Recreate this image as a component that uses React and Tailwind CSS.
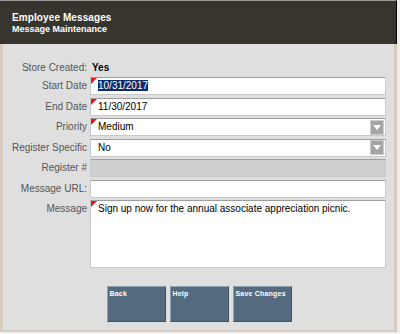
import React from 'react';

const Flag = () => (
  <svg className="absolute left-0 top-0" width="6" height="6" viewBox="0 0 6 6">
    <polygon points="0,0 6,0 0,6" fill="#e8141b" />
  </svg>
);

const Caret = () => (
  <div className="ml-auto mr-[1px] w-[14px] h-[15px] bg-[#a4a4a4] border border-[#cdcdcd] flex items-center justify-center">
    <svg width="8" height="5" viewBox="0 0 8 5">
      <polygon points="0,0 8,0 4,5" fill="#ffffff" />
    </svg>
  </div>
);

const Row = ({ label, flag, select, disabled, tall, children }) => (
  <div className="flex items-start">
    <div className="w-[84px] text-right text-[10px] leading-[18px] text-[#555555] shrink-0">{label}</div>
    <div
      className={`relative ml-[3px] w-[296px] flex items-start border border-[#c9c9c9] border-t-[#9e9e9e] ${
        tall ? 'h-[68px]' : 'h-[18px]'
      } ${disabled ? 'bg-[#cfcfcf]' : 'bg-white'}`}
    >
      {flag && <Flag />}
      <div className={`pl-[7px] text-[10px] text-black ${tall ? 'pt-[2px] leading-[12px]' : 'leading-[16px]'}`}>
        {children}
      </div>
      {select && <div className="ml-auto self-center"><Caret /></div>}
    </div>
  </div>
);

const ActionButton = ({ children }) => (
  <button className="w-[59px] h-[36px] flex items-start bg-[#546a7f] border border-t-[#8fa0b0] border-l-[#8fa0b0] border-r-[#3f5062] border-b-[#3f5062] text-left">
    <div className="pl-[2px] pt-[2px] text-[7px] leading-[9px] font-bold text-white tracking-[0.2px]">{children}</div>
  </button>
);

export default function App() {
  return (
    <div className="w-[400px] h-[334px] bg-[#f1eeeb] font-['Liberation_Sans',Arial,sans-serif]">
      <div className="w-[397px] h-[332px] flex flex-col">
        <header className="h-[44px] shrink-0 bg-[#38352f] border-t border-t-[#9a9895] border-r border-r-black pl-[12px] pt-[11px] text-white font-bold">
          <div className="text-[10px] leading-[12px] tracking-[0.1px]">Employee Messages</div>
          <div className="text-[9px] leading-[11px]">Message Maintenance</div>
        </header>

        <main className="flex-1 bg-[#dfdfdf] border-l-[3px] border-r-[3px] border-b-[2px] border-[#d8ccc1] flex flex-col pt-[17px]">
          <div className="flex items-center h-[14px] mb-[2px]">
            <div className="w-[84px] text-right text-[10px] leading-[14px] text-[#555555]">Store Created:</div>
            <div className="ml-[5px] text-[10px] leading-[14px] font-bold text-black">Yes</div>
          </div>

          <div className="flex flex-col gap-[2.5px]">
            <Row label="Start Date" flag>
              <span className="bg-[#0c2b70] text-white">10/31/2017</span>
            </Row>
            <Row label="End Date" flag>11/30/2017</Row>
            <Row label="Priority" flag select>Medium</Row>
            <Row label="Register Specific" select>No</Row>
            <Row label="Register #" disabled />
            <Row label="Message URL:" />
            <Row label="Message" flag tall>
              Sign up now for the annual associate appreciation picnic.
            </Row>
          </div>

          <div className="mt-[18px] flex justify-center gap-[4px] pl-[1px]">
            <ActionButton>Back</ActionButton>
            <ActionButton>Help</ActionButton>
            <ActionButton>Save Changes</ActionButton>
          </div>
        </main>
      </div>
    </div>
  );
}
